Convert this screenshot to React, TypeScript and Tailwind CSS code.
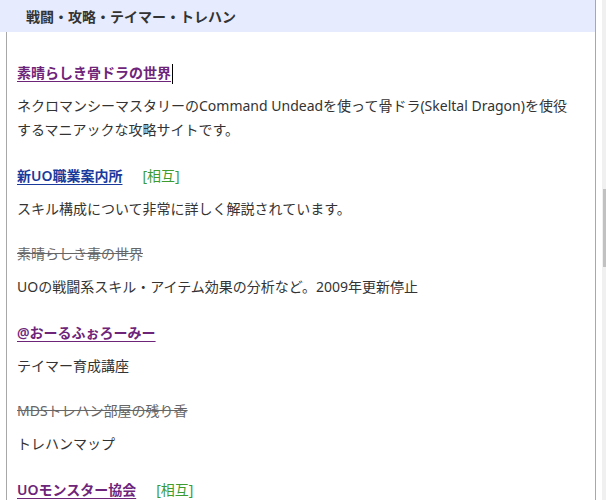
import React from 'react';

type Item = {
  title: string;
  kind: 'visited' | 'link' | 'dead';
  mutual?: boolean;
  caret?: boolean;
  desc: React.ReactNode;
};

const items: Item[] = [
  {
    title: '素晴らしき骨ドラの世界',
    kind: 'visited',
    caret: true,
    desc: (
      <>
        ネクロマンシーマスタリーのCommand Undeadを使って骨ドラ(Skeltal Dragon)を使役
        <br />
        するマニアックな攻略サイトです。
      </>
    ),
  },
  {
    title: '新UO職業案内所',
    kind: 'link',
    mutual: true,
    desc: 'スキル構成について非常に詳しく解説されています。',
  },
  {
    title: '素晴らしき毒の世界',
    kind: 'dead',
    desc: 'UOの戦闘系スキル・アイテム効果の分析など。2009年更新停止',
  },
  {
    title: '@おーるふぉろーみー',
    kind: 'visited',
    desc: 'テイマー育成講座',
  },
  {
    title: 'MDSトレハン部屋の残り香',
    kind: 'dead',
    desc: 'トレハンマップ',
  },
  {
    title: 'UOモンスター協会',
    kind: 'visited',
    mutual: true,
    desc: 'モンスターの詳細なデータを掲載しています。',
  },
];

function Title({ item }: { item: Item }) {
  if (item.kind === 'dead') {
    return <span className="text-[#666] line-through">{item.title}</span>;
  }
  return (
    <a
      href="#"
      className={
        item.kind === 'visited'
          ? 'font-semibold text-[#6e2479] underline underline-offset-[3px]'
          : 'font-semibold text-[#1a3a9c] underline underline-offset-[3px]'
      }
    >
      {item.title}
    </a>
  );
}

export default function App() {
  return (
    <div className="flex h-[500px] w-[606px] overflow-hidden bg-white font-['Noto_Sans','Noto_Sans_CJK_JP',sans-serif] text-[14px] text-[#333]">
      <div className="flex w-[596px] flex-col border-r border-[#a8a8a8]">
        <div className="flex h-[32px] shrink-0 items-center bg-[#e6ecfe] pl-[26px] font-bold text-[#333]">
          戦闘・攻略・テイマー・トレハン
        </div>
        <div className="ml-[6px] flex-1 border-l border-[#a8a8a8] pl-[10px] pr-[10px] pt-[28px]">
          {items.map((item) => (
            <div key={item.title} className="mb-[20.5px]">
              <p className="leading-[26px]">
                <Title item={item} />
                {item.caret && (
                  <span className="ml-[1px] inline-block h-[20px] w-px bg-black align-middle" />
                )}
                {item.mutual && <span className="ml-5 text-[#3e9b2e]">[相互]</span>}
              </p>
              <p className="mt-[8px] leading-[24px]">{item.desc}</p>
            </div>
          ))}
        </div>
      </div>
      <div className="flex w-[10px]">
        <div className="w-[6px] bg-white" />
        <div className="flex-1 bg-[#f0f0f0] pt-[189px]">
          <div className="ml-px h-[78px] w-[3px] bg-[#c1c1c1]" />
        </div>
      </div>
    </div>
  );
}
